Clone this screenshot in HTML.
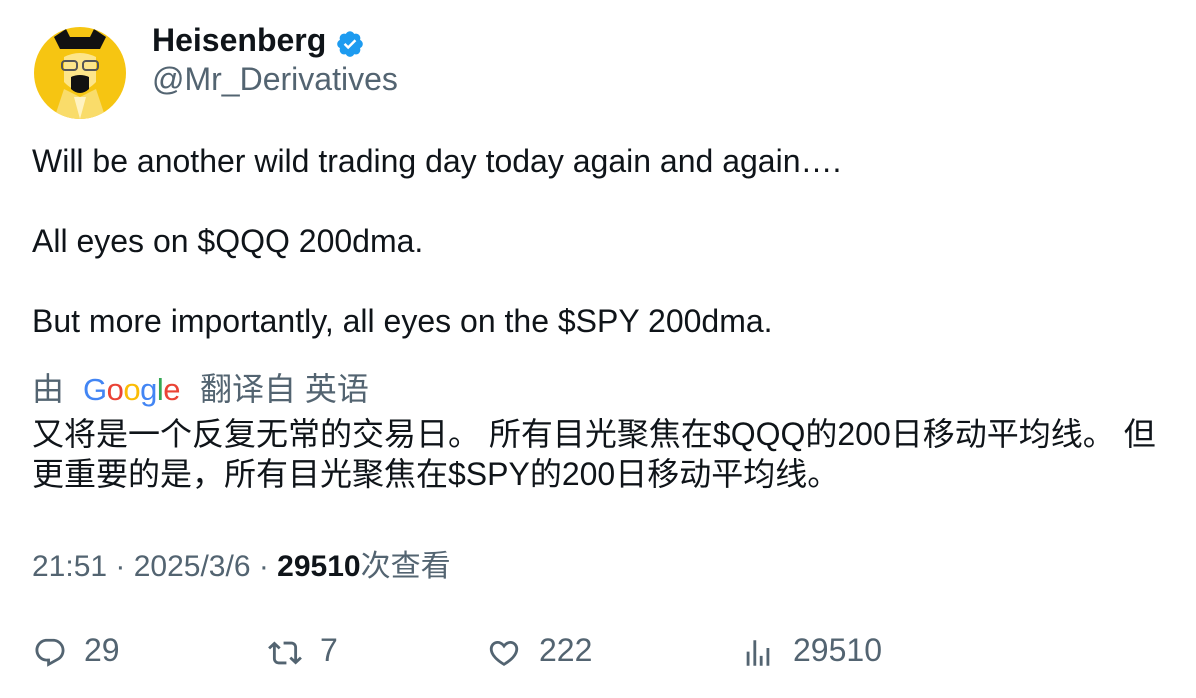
<!DOCTYPE html>
<html><head><meta charset="utf-8"><style>
body{margin:0;width:1196px;height:698px;background:#fff;font-family:"Liberation Sans","Noto Sans CJK SC",sans-serif;color:#0f1419;position:relative;overflow:hidden}
.a{position:absolute;white-space:nowrap}
.g{color:#536471}
</style></head><body>
<svg class="a" style="left:34px;top:27px" width="92" height="92" viewBox="0 0 92 92">
<defs><clipPath id="c"><circle cx="46" cy="46" r="46"/></clipPath></defs>
<g clip-path="url(#c)">
<rect width="92" height="92" fill="#f6c512"/>
<path d="M20 92 L30 62 L46 70 L62 62 L72 92Z" fill="#f9dc6a"/>
<path d="M40 70 L46 92 L52 70Z" fill="#fff3c0"/>
<path d="M30 30 Q46 22 62 30 L62 55 Q46 72 30 55Z" fill="#fde58a"/>
<path d="M20 10 L32 2 L36 10 L56 10 L60 2 L72 10 L66 22 L26 22Z" fill="#111"/>
<rect x="28" y="34" width="15" height="9" rx="3" fill="none" stroke="#555" stroke-width="2"/>
<rect x="49" y="34" width="15" height="9" rx="3" fill="none" stroke="#555" stroke-width="2"/>
<path d="M37 50 Q46 46 55 50 L55 62 Q46 70 37 62Z" fill="#111"/>
</g></svg>
<div class="a" style="left:152px;top:22px;font-size:32px;font-weight:bold">Heisenberg</div>
<svg class="a" style="left:335px;top:29px" width="30" height="30" viewBox="0 0 24 24"><path fill="#1d9bf0" d="M22.25 12c0-1.43-.88-2.67-2.19-3.34.46-1.39.2-2.9-.81-3.91s-2.52-1.27-3.91-.81c-.66-1.31-1.91-2.19-3.34-2.19s-2.67.88-3.33 2.19c-1.4-.46-2.91-.2-3.92.81s-1.26 2.52-.8 3.91c-1.31.67-2.2 1.91-2.2 3.34s.89 2.67 2.2 3.34c-.46 1.39-.21 2.9.8 3.91s2.52 1.26 3.91.81c.67 1.31 1.91 2.19 3.34 2.19s2.68-.88 3.34-2.19c1.39.45 2.9.2 3.91-.81s1.27-2.52.81-3.91c1.31-.67 2.19-1.91 2.19-3.34z"/><path fill="#fff" d="M10.54 16.2l-3.6-3.6 1.4-1.41 2.2 2.2 5.11-5.1 1.41 1.41z"/></svg>
<div class="a g" style="left:152px;top:61px;font-size:32px">@Mr_Derivatives</div>
<div class="a" style="left:32px;top:141px;font-size:32px;line-height:40px">Will be another wild trading day today again and again….<br><br>All eyes on $QQQ 200dma.<br><br>But more importantly, all eyes on the $SPY 200dma.</div>
<div class="a g" style="left:32px;top:364px;font-size:32px">由</div>
<div class="a" style="left:83px;top:372px;font-size:31px;letter-spacing:-0.5px"><span style="color:#4285f4">G</span><span style="color:#ea4335">o</span><span style="color:#fbbc05">o</span><span style="color:#4285f4">g</span><span style="color:#34a853">l</span><span style="color:#ea4335">e</span></div>
<div class="a g" style="left:200px;top:364px;font-size:32px">翻译自 英语</div>
<div class="a" style="left:32px;top:414px;font-size:32px;line-height:40px">又将是一个反复无常的交易日。 所有目光聚焦在$QQQ的200日移动平均线。 但<br>更重要的是，所有目光聚焦在$SPY的200日移动平均线。</div>
<div class="a g" style="left:32px;top:541px;font-size:30px">21:51 · 2025/3/6 · <b style="color:#0f1419">29510</b>次查看</div>
<svg class="a" style="left:33px;top:636px" width="34" height="34" viewBox="0 0 24 24"><path fill="#536471" d="M1.75 10c0-4.42 3.58-8 8-8h4.36c4.48 0 8.12 3.64 8.12 8.13 0 2.96-1.6 5.68-4.19 7.11l-8.04 4.45v-3.69h-.07c-4.49.1-8.18-3.51-8.18-8zm8-6c-3.32 0-6 2.69-6 6 0 3.37 2.77 6.08 6.13 6.02l.35-.01h1.75v2.3l5.1-2.82c1.95-1.08 3.16-3.13 3.16-5.36 0-3.39-2.74-6.13-6.12-6.13H9.75z"/></svg>
<div class="a g" style="left:84px;top:632px;font-size:32px">29</div>
<svg class="a" style="left:268px;top:636px" width="34" height="34" viewBox="0 0 24 24"><path fill="#536471" d="M4.5 3.88l4.43 4.14-1.36 1.46L5.5 7.55V16c0 1.1.9 2 2 2H13v2H7.5c-2.21 0-4-1.79-4-4V7.55L1.43 9.48.07 8.02 4.5 3.88zM16.5 6H11V4h5.5c2.21 0 4 1.79 4 4v8.45l2.07-1.93 1.36 1.46-4.43 4.14-4.43-4.14 1.36-1.46 2.07 1.93V8c0-1.1-.89-2-2-2z"/></svg>
<div class="a g" style="left:320px;top:632px;font-size:32px">7</div>
<svg class="a" style="left:487px;top:636px" width="34" height="34" viewBox="0 0 24 24"><path fill="#536471" d="M16.697 5.5c-1.222-.06-2.679.51-3.89 2.16l-.805 1.09-.806-1.09C9.984 6.01 8.526 5.44 7.304 5.5c-1.243.07-2.349.78-2.91 1.91-.552 1.12-.633 2.78.479 4.82 1.074 1.97 3.257 4.27 7.129 6.61 3.87-2.34 6.052-4.64 7.126-6.61 1.111-2.04 1.03-3.7.477-4.82-.561-1.13-1.666-1.84-2.908-1.91zm4.187 7.69c-1.351 2.48-4.001 5.12-8.379 7.67l-.503.3-.504-.3c-4.379-2.55-7.029-5.19-8.382-7.67-1.36-2.5-1.41-4.86-.514-6.67.887-1.79 2.647-2.91 4.601-3.01 1.651-.09 3.368.56 4.798 2.01 1.429-1.45 3.146-2.1 4.796-2.01 1.954.1 3.714 1.22 4.601 3.01.896 1.81.846 4.17-.514 6.67z"/></svg>
<div class="a g" style="left:539px;top:632px;font-size:32px">222</div>
<svg class="a" style="left:741px;top:636px" width="34" height="34" viewBox="0 0 24 24"><path fill="#536471" d="M8.75 21V3h2v18h-2zM18 21V8.5h2V21h-2zM4 21l.004-10h2L6 21H4zm9.248 0v-7h2v7h-2z"/></svg>
<div class="a g" style="left:793px;top:632px;font-size:32px">29510</div>
</body></html>
